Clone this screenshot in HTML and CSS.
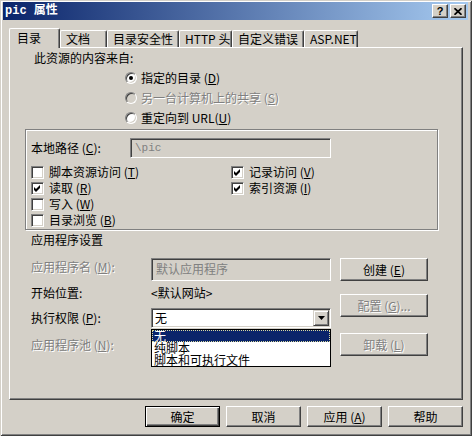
FILE: index.html
```html
<!DOCTYPE html>
<html lang="zh-CN">
  <head>
    <meta charset="UTF-8" />
    <title>pic 属性</title>
    <link rel="stylesheet" href="styles.css">
  </head>
  <body>
    <div class="window">
      <div class="titlebar">
        <span class="title">pic 属性</span>
        <div class="cap-buttons">
          <button class="cap-btn help">?</button>
          <button class="cap-btn">
            <svg width="8" height="7" viewBox="0 0 8 7">
              <path d="M0.5 0.2 L7.5 6.8 M7.5 0.2 L0.5 6.8" stroke="#000" stroke-width="1.7" />
            </svg>
          </button>
        </div>
      </div>

      <div class="tabs">
        <div class="tab active w51">目录</div>
        <div class="tab w47">文档</div>
        <div class="tab w72">目录安全性</div>
        <div class="tab w53">HTTP 头</div>
        <div class="tab w72">自定义错误</div>
        <div class="tab w54">ASP.NET</div>
      </div>

      <div class="panel">
        <div class="source-label">此资源的内容来自:</div>
        <div class="radios">
          <div class="radio-row"><span class="radio checked"></span><span>指定的目录 (<u>D</u>)</span></div>
          <div class="radio-row"><span class="radio off"></span><span class="disabled">另一台计算机上的共享 (<u>S</u>)</span></div>
          <div class="radio-row"><span class="radio"></span><span>重定向到 URL(<u>U</u>)</span></div>
        </div>

        <div class="group">
          <div class="path-row">
            <span class="path-label">本地路径 (<u>C</u>):</span>
            <div class="textbox readonly mono">\pic</div>
          </div>
          <div class="checks">
            <div class="check-col">
              <div class="check-row"><span class="checkbox"></span><span>脚本资源访问 (<u>T</u>)</span></div>
              <div class="check-row"><span class="checkbox"><svg width="11" height="11" viewBox="0 0 11 11"><path d="M2 4 L4 6 L8 2 L8 5 L4 9 L2 7 Z" fill="#000" /></svg></span><span>读取 (<u>R</u>)</span></div>
              <div class="check-row"><span class="checkbox"></span><span>写入 (<u>W</u>)</span></div>
              <div class="check-row"><span class="checkbox"></span><span>目录浏览 (<u>B</u>)</span></div>
            </div>
            <div class="check-col">
              <div class="check-row"><span class="checkbox"><svg width="11" height="11" viewBox="0 0 11 11"><path d="M2 4 L4 6 L8 2 L8 5 L4 9 L2 7 Z" fill="#000" /></svg></span><span>记录访问 (<u>V</u>)</span></div>
              <div class="check-row"><span class="checkbox"><svg width="11" height="11" viewBox="0 0 11 11"><path d="M2 4 L4 6 L8 2 L8 5 L4 9 L2 7 Z" fill="#000" /></svg></span><span>索引资源 (<u>I</u>)</span></div>
            </div>
          </div>
        </div>

        <div class="app-title">应用程序设置</div>
        <div class="app">
          <div class="app-fields">
            <div class="field-row top">
              <span class="field-label disabled">应用程序名 (<u>M</u>):</span>
              <div class="textbox readonly tall">默认应用程序</div>
            </div>
            <div class="field-row r2">
              <span class="field-label">开始位置:</span>
              <span>&lt;默认网站&gt;</span>
            </div>
            <div class="field-row r3">
              <span class="field-label">执行权限 (<u>P</u>):</span>
              <div class="combo">
                <span class="combo-text">无</span>
                <span class="combo-arrow">
                  <svg width="7" height="4" viewBox="0 0 7 4"><polygon points="0,0 7,0 3.5,4" fill="#000" /></svg>
                </span>
                <div class="dropdown">
                  <div class="item selected">无</div>
                  <div class="item">纯脚本</div>
                  <div class="item">脚本和可执行文件</div>
                </div>
              </div>
            </div>
            <div class="field-row r4">
              <span class="field-label disabled">应用程序池 (<u>N</u>):</span>
            </div>
          </div>
          <div class="app-buttons">
            <button class="btn side">创建 (<u>E</u>)</button>
            <button class="btn side b2 disabled">配置 (<u>G</u>)...</button>
            <button class="btn side b3 disabled">卸载 (<u>L</u>)</button>
          </div>
        </div>
      </div>

      <div class="dialog-buttons">
        <button class="btn default">确定</button>
        <button class="btn">取消</button>
        <button class="btn">应用 (<u>A</u>)</button>
        <button class="btn">帮助</button>
      </div>
    </div>
  </body>
</html>
```

FILE: styles.css
```css
* {
  margin: 0;
  padding: 0;
  box-sizing: border-box;
}
body {
  font-family: "Noto Sans CJK SC", "Noto Sans", sans-serif;
  font-size: 12px;
  line-height: 14px;
  color: #000;
  background-color: #d4d0c8;
}
u {
  text-underline-offset: 1px;
}

.window {
  width: 472px;
  height: 436px;
  padding: 2px 4px 0 3px;
  background-color: #d4d0c8;
  box-shadow: inset 1px 1px #d4d0c8, inset -1px -1px #404040,
    inset 2px 2px #fff, inset -2px -2px #808080;
}

/* title bar */
.titlebar {
  height: 18px;
  display: flex;
  align-items: center;
  justify-content: space-between;
  padding: 0 2px;
  background: linear-gradient(to right, #0a246a, #a6caf0);
  color: #fff;
}
.title {
  font-family: "Liberation Mono", "Noto Sans CJK SC", monospace;
  font-weight: bold;
  font-size: 12px;
}
.cap-buttons {
  display: flex;
  gap: 2px;
}
.cap-btn {
  width: 16px;
  height: 14px;
  display: flex;
  align-items: center;
  justify-content: center;
  background-color: #d4d0c8;
  border: 1px solid;
  border-color: #fff #404040 #404040 #fff;
  box-shadow: inset -1px -1px #808080;
}
.cap-btn.help {
  font-family: "Liberation Sans", sans-serif;
  font-weight: bold;
  font-size: 11px;
  line-height: 10px;
  color: #000;
}

/* tabs */
.tabs {
  display: flex;
  align-items: flex-end;
  height: 19px;
  margin: 8px 0 0 6px;
  position: relative;
  z-index: 1;
}
.tab {
  height: 17px;
  padding: 1px 0 0 5px;
  border: 1px solid #fff;
  border-bottom: none;
  border-right-color: #404040;
  border-radius: 2px 2px 0 0;
  box-shadow: inset -1px 0 #808080;
  white-space: nowrap;
  background-color: #d4d0c8;
}
.tab.active {
  height: 20px;
  margin-bottom: -1px;
  padding: 2px 0 0 7px;
}
.w47 { width: 47px; }
.w51 { width: 51px; }
.w53 { width: 53px; }
.w54 { width: 54px; }
.w72 { width: 72px; }

/* panel */
.panel {
  width: 454px;
  height: 353px;
  margin-left: 6px;
  border: 1px solid #fff;
  border-right-color: #404040;
  border-bottom-color: #404040;
  box-shadow: inset -1px -1px #808080;
}
.source-label {
  margin: 3px 0 0 24px;
}
.radios {
  margin: 3px 0 0 115px;
}
.radio-row {
  height: 20px;
  display: flex;
  align-items: center;
  gap: 4px;
}
.radio {
  width: 12px;
  height: 12px;
  border-radius: 50%;
  background-color: #fff;
  border: 1px solid;
  border-color: #808080 #fff #fff #808080;
  box-shadow: inset 1px 1px #404040, inset -1px -1px #d4d0c8;
  position: relative;
}
.radio.off {
  background-color: #d4d0c8;
}
.radio.checked::after {
  content: "";
  position: absolute;
  left: 3px;
  top: 3px;
  width: 4px;
  height: 4px;
  border-radius: 50%;
  background-color: #000;
}
.disabled {
  color: #808080;
  text-shadow: 1px 1px #fff;
}

/* group box */
.group {
  width: 413px;
  height: 101px;
  margin: 1px 0 0 15px;
  padding: 8px 0 0 5px;
  border: 1px solid #808080;
  box-shadow: inset 1px 1px #fff, 1px 1px #fff;
}
.path-row {
  display: flex;
  align-items: center;
  height: 20px;
}
.path-label {
  width: 99px;
}
.textbox {
  width: 201px;
  height: 20px;
  padding: 2px 0 0 4px;
  background-color: #fff;
  border: 1px solid;
  border-color: #808080 #fff #fff #808080;
  box-shadow: inset 1px 1px #404040, inset -1px -1px #d4d0c8;
}
.textbox.readonly {
  background-color: #d4d0c8;
  color: #808080;
}
.textbox.tall {
  width: 180px;
  height: 23px;
  padding-top: 3px;
}
.mono {
  font-family: "Liberation Mono", monospace;
  font-size: 11px;
}
.checks {
  display: flex;
  margin-top: 6px;
}
.check-col {
  width: 200px;
}
.check-row {
  height: 16px;
  display: flex;
  align-items: center;
  gap: 5px;
}
.checkbox {
  width: 13px;
  height: 13px;
  display: flex;
  background-color: #fff;
  border: 1px solid;
  border-color: #808080 #fff #fff #808080;
  box-shadow: inset 1px 1px #404040, inset -1px -1px #d4d0c8;
}

/* application settings */
.app-title {
  margin: 3px 0 0 21px;
}
.app {
  display: flex;
  margin: 11px 0 0 21px;
}
.app-fields {
  width: 300px;
}
.field-row {
  display: flex;
  align-items: center;
  height: 20px;
}
.field-row.top {
  align-items: flex-start;
  height: 23px;
}
.field-row.top .field-label {
  padding-top: 2px;
}
.field-row.r2 { margin-top: 2px; }
.field-row.r3 { margin-top: 5px; }
.field-row.r4 { margin-top: 7px; }
.field-label {
  width: 120px;
}
.combo {
  position: relative;
  width: 180px;
  height: 20px;
  display: flex;
  align-items: center;
  justify-content: space-between;
  padding-left: 3px;
  background-color: #fff;
  border: 1px solid;
  border-color: #808080 #fff #fff #808080;
  box-shadow: inset 1px 1px #404040, inset -1px -1px #d4d0c8;
}
.combo-arrow {
  width: 16px;
  height: 16px;
  margin-right: 1px;
  display: flex;
  align-items: center;
  justify-content: center;
  background-color: #d4d0c8;
  border: 1px solid;
  border-color: #d4d0c8 #404040 #404040 #d4d0c8;
  box-shadow: inset 1px 1px #fff, inset -1px -1px #808080;
}
.dropdown {
  position: absolute;
  left: -1px;
  top: calc(100% + 2px);
  width: 180px;
  background-color: #fff;
  border: 1px solid #000;
  z-index: 2;
}
.item {
  height: 12px;
  line-height: 12px;
  padding-left: 2px;
  white-space: nowrap;
}
.item.selected {
  background-color: #0a246a;
  color: #fff;
  outline: 1px dotted #d8d8a0;
  outline-offset: -1px;
}
.app-buttons {
  display: flex;
  flex-direction: column;
  margin-left: 9px;
}

/* buttons */
.btn {
  width: 75px;
  height: 21px;
  font: inherit;
  color: #000;
  background-color: #d4d0c8;
  border: 1px solid;
  border-color: #fff #404040 #404040 #fff;
  box-shadow: inset -1px -1px #808080;
}
.btn.side {
  width: 88px;
  height: 23px;
}
.btn.b2 { margin-top: 13px; }
.btn.b3 { margin-top: 16px; }
.btn.disabled {
  color: #808080;
  text-shadow: 1px 1px #fff;
}
.btn.default {
  border-color: #000;
  box-shadow: inset 1px 1px #fff, inset -1px -1px #404040, inset -2px -2px #808080;
}
.dialog-buttons {
  width: 454px;
  display: flex;
  justify-content: flex-end;
  gap: 6px;
  margin: 6px 0 0 6px;
}
```
